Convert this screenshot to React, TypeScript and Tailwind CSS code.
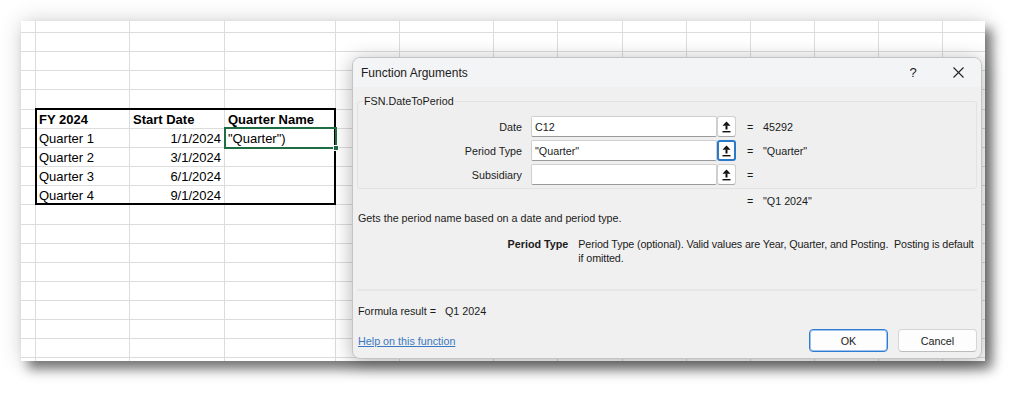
import React from "react";

const COLS = [15, 94, 95, 111, 64, 94, 64, 65, 64, 64, 64, 64, 64, 64];
const ROWS = 19;

type Cell = { t: string; bold?: boolean; right?: boolean };

function cellAt(r: number, c: number): Cell | null {
  if (r === 5) {
    if (c === 1) return { t: "FY 2024", bold: true };
    if (c === 2) return { t: "Start Date", bold: true };
    if (c === 3) return { t: "Quarter Name", bold: true };
  }
  const q = ["1/1/2024", "3/1/2024", "6/1/2024", "9/1/2024"];
  if (r >= 6 && r <= 9) {
    const i = r - 6;
    if (c === 1) return { t: `Quarter ${i + 1}` };
    if (c === 2) return { t: q[i], right: true };
    if (c === 3 && i === 0) return { t: '"Quarter")' };
  }
  return null;
}

function RefIcon() {
  return (
    <svg width="9" height="12" viewBox="0 0 9 12" fill="#111">
      <polygon points="4.5,0.5 0.5,4.8 8.5,4.8" />
      <rect x="3.5" y="4.5" width="2" height="4" />
      <rect x="0.5" y="10" width="8" height="1.4" />
    </svg>
  );
}

function ArgRow({ label, value, shown, focused }: { label: string; value: string; shown: string; focused?: boolean }) {
  return (
    <div className="flex h-[21px] items-center">
      <div className="w-[164px] text-right">{label}</div>
      <div className="ml-[9px] flex h-[21px]">
        <div className="flex h-full w-[186px] items-center rounded-[2px] border border-[#cfcfcf] border-b-[#9a9a9a] bg-white pl-[3px]">
          {value}
        </div>
        <div
          className={
            "flex h-full w-[19px] items-center justify-center rounded-[3px] bg-white " +
            (focused ? "border-2 border-[#2b79c9]" : "border border-[#cfcfcf] border-b-[#a8a8a8]")
          }
        >
          <RefIcon />
        </div>
      </div>
      <div className="ml-[11px] w-[16px]">=</div>
      <div>{shown}</div>
    </div>
  );
}

export default function App() {
  return (
    <div className="relative h-[403px] w-[1027px] overflow-hidden bg-white pl-[21px] pt-[21px] font-['Liberation_Sans',Arial,sans-serif]">
      {/* spreadsheet */}
      <div className="relative h-[340px] w-[964px] overflow-hidden bg-white shadow-[7px_8px_11px_rgba(0,0,0,0.5),0_0_22px_rgba(0,0,0,0.16)]">
        <div className="grid grid-cols-[15px_94px_95px_111px_64px_94px_64px_65px_64px_64px_64px_64px_64px_64px] grid-rows-[12px_19px_19px_19px_20px_19px_19px_19px_19px_19px_20px_19px_19px_19px_19px_19px_19px_19px_19px]">
          {Array.from({ length: ROWS }).map((_, r) =>
            COLS.map((_, c) => {
              const cell = cellAt(r, c);
              return (
                <div
                  key={`${r}-${c}`}
                  className={
                    "flex items-center overflow-visible whitespace-nowrap border-b border-r border-[#dcdcdc] px-[2px] text-[13px] leading-none text-black " +
                    (cell?.right ? "justify-end" : "justify-start") +
                    (cell?.bold ? " font-bold" : "")
                  }
                >
                  {cell ? <span className={cell.right ? "pr-px" : "pl-px"}>{cell.t}</span> : null}
                </div>
              );
            })
          )}
        </div>
        {/* table outline */}
        <div className="absolute left-[14px] top-[87px] h-[97px] w-[301px] border-2 border-black" />
        {/* selection */}
        <div className="absolute left-[203px] top-[106px] h-[22px] w-[113px] border-2 border-[#1f6e43]">
          <div className="absolute -bottom-[4px] -right-[4px] h-[6px] w-[6px] border border-white bg-[#1f6e43]" />
        </div>
      </div>

      {/* dialog */}
      <div className="absolute left-[352px] top-[57px] flex h-[302px] w-[630px] flex-col overflow-hidden rounded-[8px] border border-[#c4c4c4] bg-[#f0f0f0] text-[10.75px] leading-[14px] text-[#1b1b1b] shadow-[0_3px_20px_rgba(0,0,0,0.3)]">
        <div className="flex h-[29px] items-center bg-[#f3f4f5]">
          <div className="pl-[8px] text-[12px]">Function Arguments</div>
          <div className="ml-auto flex h-full items-center">
            <div className="flex w-[46px] justify-center text-[13px]">?</div>
            <div className="flex w-[45px] justify-center">
              <svg width="11" height="11" viewBox="0 0 11 11" stroke="#222" strokeWidth="1.1">
                <line x1="0.5" y1="0.5" x2="10.5" y2="10.5" />
                <line x1="10.5" y1="0.5" x2="0.5" y2="10.5" />
              </svg>
            </div>
          </div>
        </div>
        <div className="flex flex-1 flex-col px-[4px]">
          <div className="relative mt-[14px] h-[88px] rounded-[3px] border border-[#e2e2e2] bg-[#efefef] pt-[14px]">
            <div className="absolute -top-[8px] left-[5px] bg-[#f0f0f0] px-[1px]">FSN.DateToPeriod</div>
            <div className="flex flex-col gap-[3px]">
              <ArgRow label="Date" value="C12" shown="45292" />
              <ArgRow label="Period Type" value={'"Quarter"'} shown={'"Quarter"'} focused />
              <ArgRow label="Subsidiary" value="" shown="" />
            </div>
          </div>
          <div className="mt-[5px] flex h-[14px]">
            <div className="ml-[390px] w-[16px]">=</div>
            <div>"Q1 2024"</div>
          </div>
          <div className="mt-[3px] pl-[1px]">Gets the period name based on a date and period type.</div>
          <div className="mt-[12px] flex">
            <div className="w-[212px] text-right font-bold">Period Type</div>
            <div className="ml-[10px] w-[400px] whitespace-pre tracking-[-0.12px]">
              {"Period Type (optional). Valid values are Year, Quarter, and Posting.  Posting is default\nif omitted."}
            </div>
          </div>
          <div className="mt-[24px] h-[2px] bg-[#e6e6e6]" />
          <div className="mt-[13px] flex pl-[1px]">
            <div className="w-[87px]">Formula result =</div>
            <div>Q1 2024</div>
          </div>
          <div className="mt-[11px] flex h-[23px] items-center">
            <div className="pl-[1px] text-[#3a78c2] underline">Help on this function</div>
            <div className="ml-auto flex gap-[10px]">
              <div className="flex h-[23px] w-[79px] items-center justify-center rounded-[4px] border border-[#2f7bd0] bg-[#fdfdfd] shadow-[inset_0_0_0_1px_#9dc3ee]">
                OK
              </div>
              <div className="flex h-[23px] w-[79px] items-center justify-center rounded-[4px] border border-[#d6d6d6] border-b-[#bdbdbd] bg-[#fdfdfd]">
                Cancel
              </div>
            </div>
          </div>
        </div>
      </div>
    </div>
  );
}
